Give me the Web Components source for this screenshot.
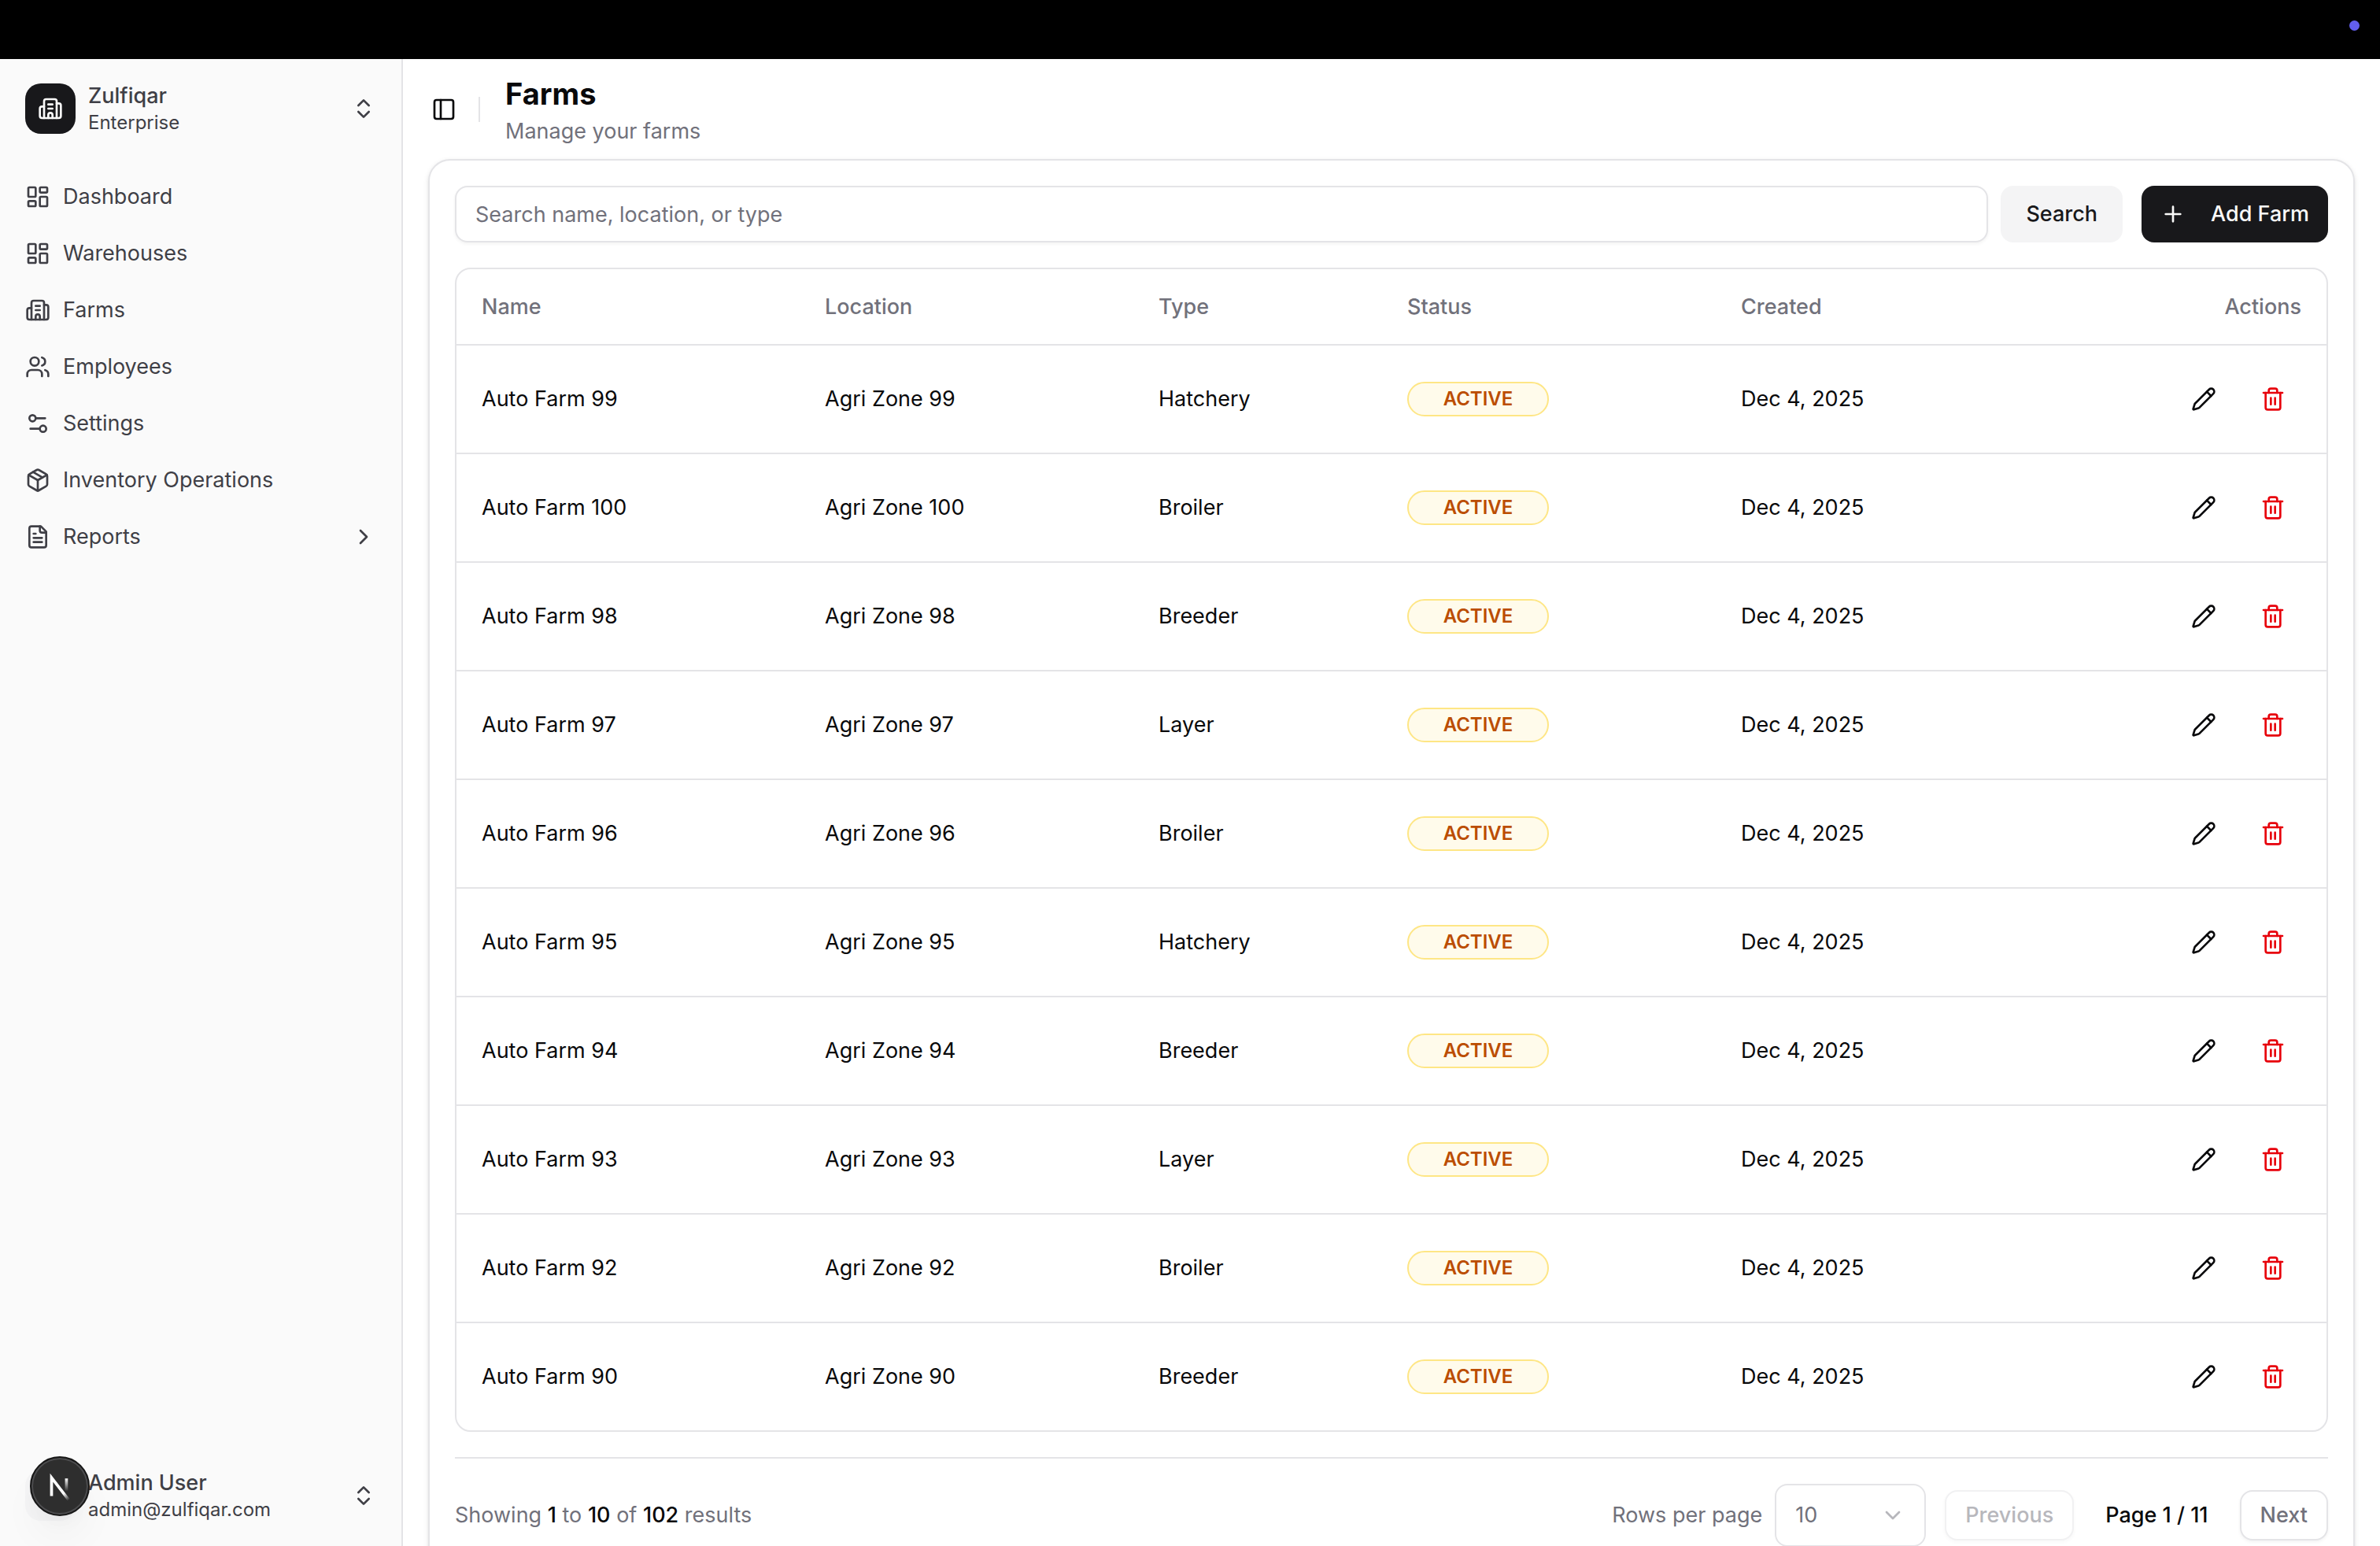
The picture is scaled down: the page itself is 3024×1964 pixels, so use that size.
<!DOCTYPE html>
<html lang="en">
<head>
<meta charset="utf-8">
<meta name="viewport" content="width=device-width, initial-scale=1">
<title>Farms</title>
<style>
  :root {
    --border: #e4e4e7;
    --muted: #71717b;
    --text: #09090b;
    --primary: #18181b;
    --sidebar-text: #3f3f46;
  }
  body {
    margin: 0;
    font: 27px/40px Inter, "Liberation Sans", sans-serif;
    color: var(--text);
    background: #fff;
  }
</style>
</head>
<body>

<app-shell>
  <app-sidebar slot="sidebar">
    <account-button slot="header" name="Zulfiqar" detail="Enterprise" icon="building"></account-button>
    <nav-item icon="dashboard">Dashboard</nav-item>
    <nav-item icon="dashboard">Warehouses</nav-item>
    <nav-item icon="building">Farms</nav-item>
    <nav-item icon="users">Employees</nav-item>
    <nav-item icon="settings">Settings</nav-item>
    <nav-item icon="package">Inventory Operations</nav-item>
    <nav-item icon="file" expandable>Reports</nav-item>
    <account-button slot="footer" name="Admin User" detail="admin@zulfiqar.com"></account-button>
  </app-sidebar>

  <page-header slot="header">
    <span slot="title">Farms</span>
    <span slot="subtitle">Manage your farms</span>
  </page-header>

  <app-card>
    <farm-toolbar></farm-toolbar>
    <farm-table></farm-table>
    <table-pager from="1" to="10" total="102" page="1" pages="11"></table-pager>
  </app-card>
</app-shell>
<dev-badge></dev-badge>

<script>
const ICONS = {
  building: `<path d="M10 12h4M10 8h4M14 21v-3a2 2 0 0 0-4 0v3"/><path d="M6 10H4a2 2 0 0 0-2 2v7a2 2 0 0 0 2 2h16a2 2 0 0 0 2-2V9a2 2 0 0 0-2-2h-2"/><path d="M6 21V5a2 2 0 0 1 2-2h8a2 2 0 0 1 2 2v16"/>`,
  dashboard: `<rect width="7" height="9" x="3" y="3" rx="1"/><rect width="7" height="5" x="14" y="3" rx="1"/><rect width="7" height="9" x="14" y="12" rx="1"/><rect width="7" height="5" x="3" y="16" rx="1"/>`,
  users: `<path d="M16 21v-2a4 4 0 0 0-4-4H6a4 4 0 0 0-4 4v2"/><path d="M16 3.128a4 4 0 0 1 0 7.744"/><path d="M22 21v-2a4 4 0 0 0-3-3.87"/><circle cx="9" cy="7" r="4"/>`,
  settings: `<path d="M14 17H5M19 7h-9"/><circle cx="17" cy="17" r="3"/><circle cx="7" cy="7" r="3"/>`,
  package: `<path d="M11 21.73a2 2 0 0 0 2 0l7-4A2 2 0 0 0 21 16V8a2 2 0 0 0-1-1.73l-7-4a2 2 0 0 0-2 0l-7 4A2 2 0 0 0 3 8v8a2 2 0 0 0 1 1.73z"/><path d="M12 22V12"/><path d="M3.29 7 12 12l8.71-5"/><path d="m7.5 4.27 9 5.15"/>`,
  file: `<path d="M15 2H6a2 2 0 0 0-2 2v16a2 2 0 0 0 2 2h12a2 2 0 0 0 2-2V7Z"/><path d="M14 2v4a2 2 0 0 0 2 2h4"/><path d="M10 9H8M16 13H8M16 17H8"/>`,
  panel: `<rect width="18" height="18" x="3" y="3" rx="2"/><path d="M9 3v18"/>`,
  updown: `<path d="m7 15 5 5 5-5M7 9l5-5 5 5"/>`,
  right: `<path d="m9 18 6-6-6-6"/>`,
  down: `<path d="m6 9 6 6 6-6"/>`,
  plus: `<path d="M5 12h14M12 5v14"/>`,
  pencil: `<path d="M21.174 6.812a1 1 0 0 0-3.986-3.987L3.842 16.174a2 2 0 0 0-.5.83l-1.321 4.352a.5.5 0 0 0 .623.622l4.353-1.32a2 2 0 0 0 .83-.497z"/><path d="m15 5 4 4"/>`,
  trash: `<path d="M10 11v6M14 11v6"/><path d="M19 6v14a2 2 0 0 1-2 2H7a2 2 0 0 1-2-2V6"/><path d="M3 6h18"/><path d="M8 6V4a2 2 0 0 1 2-2h4a2 2 0 0 1 2 2v2"/>`,
};

class AppIcon extends HTMLElement {
  constructor() {
    super();
    this.attachShadow({ mode: "open" });
  }

  connectedCallback() {
    this.shadowRoot.innerHTML = `
      <style>
        :host { display: block; flex: none; width: 32px; height: 32px; }
        svg {
          display: block; width: 100%; height: 100%; fill: none; stroke: currentColor;
          stroke-width: 2; stroke-linecap: round; stroke-linejoin: round;
        }
      </style>
      <svg viewBox="0 0 24 24" aria-hidden="true">${ICONS[this.getAttribute("name")] || ""}</svg>
    `;
  }
}
customElements.define("app-icon", AppIcon);

class AppShell extends HTMLElement {
  constructor() {
    super();
    this.attachShadow({ mode: "open" });
    this.shadowRoot.innerHTML = `
      <style>
        :host { display: flex; flex-direction: column; height: 100vh; }
        .topbar {
          display: flex; flex: none; justify-content: flex-end; height: 75px;
          box-sizing: border-box; padding: 26px 26px 0; background: #000;
        }
        .dot { width: 13px; height: 13px; border-radius: 50%; background: #625eed; }
        .body { display: flex; flex: 1; min-height: 0; }
        main { flex: 1; min-width: 0; overflow: auto; scrollbar-width: none; }
        .content { padding: 0 32px 32px; }
      </style>
      <div class="topbar"><span class="dot"></span></div>
      <div class="body">
        <slot name="sidebar"></slot>
        <main>
          <slot name="header"></slot>
          <div class="content"><slot></slot></div>
        </main>
      </div>
    `;
  }
}
customElements.define("app-shell", AppShell);

class AppSidebar extends HTMLElement {
  constructor() {
    super();
    this.attachShadow({ mode: "open" });
    this.shadowRoot.innerHTML = `
      <style>
        :host {
          display: flex; flex-direction: column; flex: none; width: 512px;
          box-sizing: border-box; border-right: 2px solid var(--border);
          background: #fafafa; color: var(--sidebar-text);
        }
        header { padding: 15px 16px 16px; }
        nav { display: flex; flex: 1; flex-direction: column; gap: 8px; padding: 16px; }
        footer { padding: 16px; }
      </style>
      <header><slot name="header"></slot></header>
      <nav aria-label="Main"><slot></slot></nav>
      <footer><slot name="footer"></slot></footer>
    `;
  }
}
customElements.define("app-sidebar", AppSidebar);

class AccountButton extends HTMLElement {
  constructor() {
    super();
    this.attachShadow({ mode: "open" });
  }

  connectedCallback() {
    const icon = this.getAttribute("icon");
    this.shadowRoot.innerHTML = `
      <style>
        :host { display: block; }
        button {
          display: flex; align-items: center; gap: 16px; width: 100%; height: 96px;
          padding: 16px; border: 0; border-radius: 16px; background: none;
          font: inherit; color: inherit; text-align: left;
        }
        .avatar {
          display: grid; place-items: center; flex: none; width: 64px; height: 64px;
          border-radius: 20px; background: #f4f4f5; color: #fafafa;
        }
        .avatar.logo { background: var(--primary); }
        .text { display: grid; flex: 1; min-width: 0; }
        .name { font-weight: 500; line-height: 36px; }
        .detail { font-size: 24px; line-height: 32px; }
      </style>
      <button type="button">
        <span class="avatar ${icon ? "logo" : ""}">${icon ? `<app-icon name="${icon}"></app-icon>` : ""}</span>
        <span class="text">
          <span class="name">${this.getAttribute("name")}</span>
          <span class="detail">${this.getAttribute("detail")}</span>
        </span>
        <app-icon name="updown"></app-icon>
      </button>
    `;
  }
}
customElements.define("account-button", AccountButton);

class NavItem extends HTMLElement {
  constructor() {
    super();
    this.attachShadow({ mode: "open" });
  }

  connectedCallback() {
    this.shadowRoot.innerHTML = `
      <style>
        :host { display: block; }
        a {
          display: flex; align-items: center; gap: 16px; height: 64px; padding: 0 16px;
          box-sizing: border-box; border-radius: 16px; color: inherit; text-decoration: none;
        }
        a:hover { background: #f4f4f5; }
        span { flex: 1; }
      </style>
      <a href="#">
        <app-icon name="${this.getAttribute("icon")}"></app-icon>
        <span><slot></slot></span>
        ${this.hasAttribute("expandable") ? `<app-icon name="right"></app-icon>` : ""}
      </a>
    `;
  }
}
customElements.define("nav-item", NavItem);

class PageHeader extends HTMLElement {
  constructor() {
    super();
    this.attachShadow({ mode: "open" });
    this.shadowRoot.innerHTML = `
      <style>
        :host {
          display: flex; align-items: center; gap: 16px; height: 127px;
          box-sizing: border-box; padding: 0 32px 0 24px;
        }
        button {
          display: grid; place-items: center; width: 56px; height: 56px; padding: 0;
          border: 0; border-radius: 16px; background: none; color: inherit;
        }
        .separator { width: 2px; height: 32px; margin-right: 16px; background: var(--border); }
        h1 { margin: 0; font-size: 38px; line-height: 56px; font-weight: 700; }
        p { margin: 0; color: var(--muted); }
      </style>
      <button type="button" aria-label="Toggle sidebar"><app-icon name="panel"></app-icon></button>
      <div class="separator"></div>
      <div>
        <h1><slot name="title"></slot></h1>
        <p><slot name="subtitle"></slot></p>
      </div>
    `;
  }
}
customElements.define("page-header", PageHeader);

class AppCard extends HTMLElement {
  constructor() {
    super();
    this.attachShadow({ mode: "open" });
    this.shadowRoot.innerHTML = `
      <style>
        :host {
          display: flex; flex-direction: column; gap: 32px; padding: 32px;
          border: 2px solid var(--border); border-radius: 28px; background: #fff;
          box-shadow: 0 2px 6px rgba(0, 0, 0, .1), 0 2px 4px -2px rgba(0, 0, 0, .1);
        }
      </style>
      <slot></slot>
    `;
  }
}
customElements.define("app-card", AppCard);

class FarmToolbar extends HTMLElement {
  constructor() {
    super();
    this.attachShadow({ mode: "open" });
    this.shadowRoot.innerHTML = `
      <style>
        :host { display: flex; gap: 24px; }
        form { display: flex; flex: 1; gap: 16px; }
        input, button {
          height: 72px; box-sizing: border-box; border-radius: 16px; font: inherit;
        }
        input {
          flex: 1; min-width: 0; padding: 0 24px; border: 2px solid var(--border);
          background: #fff; color: inherit; box-shadow: 0 2px 4px rgba(0, 0, 0, .05);
        }
        input::placeholder { color: var(--muted); opacity: 1; }
        button { display: flex; align-items: center; border: 0; font-weight: 500; }
        .search { padding: 0 32px; background: #f4f4f5; color: var(--primary); }
        .add { gap: 32px; padding: 0 24px; background: var(--primary); color: #fafafa; }
      </style>
      <form role="search">
        <input type="text" aria-label="Search farms" placeholder="Search name, location, or type">
        <button class="search" type="submit">Search</button>
      </form>
      <button class="add" type="button"><app-icon name="plus"></app-icon>Add Farm</button>
    `;
    this.shadowRoot.querySelector("form").addEventListener("submit", (e) => e.preventDefault());
  }
}
customElements.define("farm-toolbar", FarmToolbar);

class StatusBadge extends HTMLElement {
  constructor() {
    super();
    this.attachShadow({ mode: "open" });
    this.shadowRoot.innerHTML = `
      <style>
        :host {
          display: flex; align-items: center; justify-content: center;
          width: 180px; height: 44px; box-sizing: border-box;
          border: 2px solid #fee685; border-radius: 22px; background: #fffbeb;
          color: #bb4d00; font-size: 24px; line-height: 32px; font-weight: 600;
        }
      </style>
      <slot></slot>
    `;
  }
}
customElements.define("status-badge", StatusBadge);

const FARMS = [
  [99, "Hatchery"],
  [100, "Broiler"],
  [98, "Breeder"],
  [97, "Layer"],
  [96, "Broiler"],
  [95, "Hatchery"],
  [94, "Breeder"],
  [93, "Layer"],
  [92, "Broiler"],
  [90, "Breeder"],
];

class FarmTable extends HTMLElement {
  constructor() {
    super();
    this.attachShadow({ mode: "open" });
    this.shadowRoot.innerHTML = `
      <style>
        :host {
          display: block; overflow: hidden;
          border: 2px solid var(--border); border-radius: 20px;
        }
        table { width: 100%; table-layout: fixed; border-spacing: 0; }
        .name { width: 436px; }
        .location, .status { width: 424px; }
        .type { width: 316px; }
        th, td { box-sizing: border-box; border-bottom: 2px solid var(--border); text-align: left; }
        th { height: 97px; padding: 0 32px; font-weight: 500; color: var(--muted); }
        th:last-child { text-align: right; }
        td { height: 138px; padding: 32px; }
        tr:last-child td { height: 136px; border-bottom: 0; }
        .actions { display: flex; justify-content: flex-end; gap: 16px; }
        button {
          display: grid; place-items: center; width: 72px; height: 72px; padding: 0;
          border: 0; border-radius: 16px; background: none; color: inherit;
        }
        .delete { color: #e7000b; }
      </style>
      <table>
        <colgroup>
          <col class="name"><col class="location"><col class="type"><col class="status"><col><col>
        </colgroup>
        <thead>
          <tr><th>Name</th><th>Location</th><th>Type</th><th>Status</th><th>Created</th><th>Actions</th></tr>
        </thead>
        <tbody>
          ${FARMS.map(([n, type]) => `
            <tr>
              <td>Auto Farm ${n}</td>
              <td>Agri Zone ${n}</td>
              <td>${type}</td>
              <td><status-badge>ACTIVE</status-badge></td>
              <td>Dec 4, 2025</td>
              <td>
                <div class="actions">
                  <button type="button" aria-label="Edit"><app-icon name="pencil"></app-icon></button>
                  <button type="button" class="delete" aria-label="Delete"><app-icon name="trash"></app-icon></button>
                </div>
              </td>
            </tr>`).join("")}
        </tbody>
      </table>
    `;
  }
}
customElements.define("farm-table", FarmTable);

class TablePager extends HTMLElement {
  constructor() {
    super();
    this.attachShadow({ mode: "open" });
  }

  connectedCallback() {
    const get = (name) => this.getAttribute(name);
    this.shadowRoot.innerHTML = `
      <style>
        :host {
          display: flex; align-items: center; justify-content: space-between;
          padding-top: 32px; border-top: 2px solid var(--border); color: var(--muted);
        }
        b { font-weight: 500; color: var(--text); }
        .controls, .rows { display: flex; align-items: center; }
        .controls { gap: 24px; }
        .rows { gap: 16px; }
        .select { display: grid; align-items: center; }
        .select > * { grid-area: 1 / 1; }
        .select app-icon { justify-self: end; margin-right: 26px; opacity: .5; pointer-events: none; }
        select {
          appearance: none; width: 192px; height: 80px; padding: 0 24px;
          border: 2px solid var(--border); border-radius: 16px; background: #fff;
          font: inherit; color: inherit;
        }
        .page { padding: 0 16px; color: var(--text); font-weight: 500; }
        button {
          height: 64px; padding: 0 24px; border: 2px solid var(--border); border-radius: 16px;
          background: #fff; color: inherit; font: inherit; font-weight: 500;
          box-shadow: 0 2px 4px rgba(0, 0, 0, .05);
        }
        button:disabled { opacity: .5; }
      </style>
      <div>Showing <b>${get("from")}</b> to <b>${get("to")}</b> of <b>${get("total")}</b> results</div>
      <div class="controls">
        <div class="rows">
          <label for="rows">Rows per page</label>
          <div class="select">
            <select id="rows"><option>10</option><option>20</option><option>50</option></select>
            <app-icon name="down"></app-icon>
          </div>
        </div>
        <button type="button" disabled>Previous</button>
        <span class="page">Page ${get("page")} / ${get("pages")}</span>
        <button type="button">Next</button>
      </div>
    `;
  }
}
customElements.define("table-pager", TablePager);

// Floating tools button in the corner, drawn over the sidebar
class DevBadge extends HTMLElement {
  constructor() {
    super();
    this.attachShadow({ mode: "open" });
    this.shadowRoot.innerHTML = `
      <style>
        :host { position: fixed; left: 38px; bottom: 38px; }
        button {
          display: block; width: 76px; height: 76px; padding: 0; border: 2px solid #171717;
          border-radius: 50%; background: #2e2e2e;
          box-shadow: inset 0 0 0 2px #4d4d4f, 0 16px 32px -8px rgba(0, 0, 0, .04),
            0 32px 48px rgba(0, 0, 0, .03);
        }
        svg { display: block; width: 72px; height: 72px; }
      </style>
      <button type="button" aria-label="Open developer tools">
        <svg viewBox="1 1 36 36" fill="none" stroke-width="1.86">
          <defs>
            <linearGradient id="diagonal" gradientUnits="userSpaceOnUse" x1="9.96" y1="11.12" x2="15.48" y2="17.97">
              <stop stop-color="#fff"/>
              <stop offset=".604" stop-color="#fff" stop-opacity="0"/>
            </linearGradient>
            <linearGradient id="stem" gradientUnits="userSpaceOnUse" x1="11.82" y1="1.4" x2="11.79" y2="9.63">
              <stop stop-color="#fff"/>
              <stop offset="1" stop-color="#fff" stop-opacity="0"/>
            </linearGradient>
          </defs>
          <g transform="translate(11.4 12.6)">
            <path d="M13.3 15.2 2.34 1v11.6" stroke="url(#diagonal)"/>
            <path d="M11.825 1.5v11.6" stroke="url(#stem)"/>
          </g>
        </svg>
      </button>
    `;
  }
}
customElements.define("dev-badge", DevBadge);
</script>
</body>
</html>
